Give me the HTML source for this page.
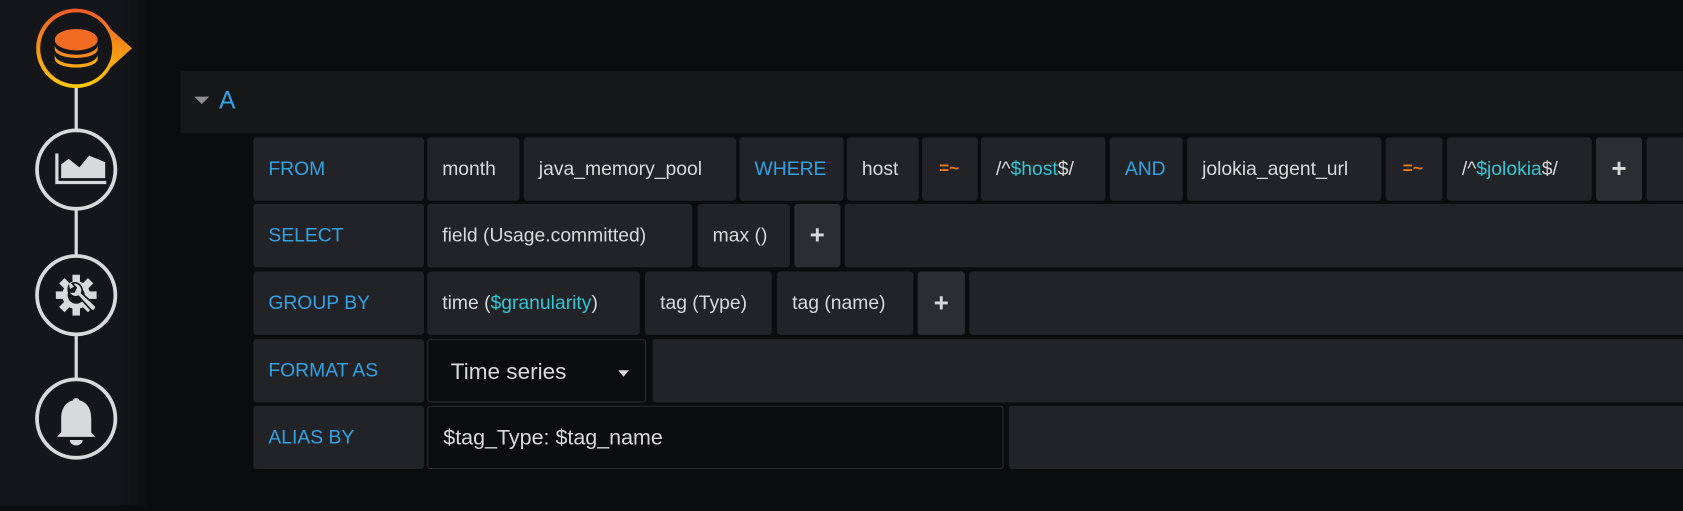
<!DOCTYPE html>
<html><head><meta charset="utf-8"><style>
html,body{margin:0;padding:0;background:#0b0c0e;width:1683px;height:505px;overflow:hidden}
#w{position:absolute;left:0;top:0;width:1568px;height:471px;transform:scale(1.0733);transform-origin:0 0;font-family:"Liberation Sans",sans-serif;font-size:18px;color:#d8d9da}
#side{position:absolute;left:0;top:0;width:136px;height:471px;background:linear-gradient(90deg,#141619 0,#141619 110px,#0e0f11 136px)}
#hdr{position:absolute;left:168px;top:66px;width:1400px;height:58px;background:#161719}
#hdr .t{position:absolute;left:36px;top:14px;font-size:23px;color:#33a2e5}
#hdr .c{position:absolute;left:13px;top:24px;width:0;height:0;border-left:7px solid transparent;border-right:7px solid transparent;border-top:7px solid #8e8e8e}
.row{position:absolute;left:236px;height:59px;width:1340px}
.s{position:absolute;top:0;height:59px;background:#222327;border-radius:3px;line-height:59px;white-space:nowrap;padding-left:14px;box-sizing:border-box}
.lb{color:#33a2e5}
.k{color:#33a2e5}
.op{color:#eb7b18;font-weight:bold}
.v{color:#33c5d4}
.p{background:#2c2d32;text-align:center;padding:0;font-weight:bold;font-size:24px}
.dk{background:#0b0c0e;border:1px solid #2a2b2e}
</style></head><body><div id="w">
<div id="side">
<svg width="136" height="471" viewBox="0 0 136 471">
<defs><linearGradient id="g" x1="0" y1="0" x2="0" y2="1"><stop offset="0" stop-color="#f05a28"/><stop offset="1" stop-color="#fbca0a"/></linearGradient></defs>
<line x1="71" y1="80" x2="71" y2="360" stroke="#d8d9da" stroke-width="3"/>
<path d="M71 8 A37 37 0 0 1 103 27 L123 45 L103 63 A37 37 0 1 1 71 8 Z" fill="url(#g)"/>
<circle cx="71" cy="45" r="33.5" fill="#141619"/>
<ellipse cx="71" cy="37" rx="20" ry="10" fill="#f26b22"/>
<path d="M51 42 v4 a20 8 0 0 0 40 0 v-4 a20 9 0 0 1 -40 0Z" fill="#f58a1f"/>
<path d="M51 51 v4 a20 8 0 0 0 40 0 v-4 a20 9 0 0 1 -40 0Z" fill="#f9a71a"/>
<g fill="#141619" stroke="#d8d9da" stroke-width="3.5">
<circle cx="71" cy="158" r="36.5"/><circle cx="71" cy="275" r="36.5"/><circle cx="71" cy="390" r="36.5"/></g>
<path d="M53 143 v27 h46" fill="none" stroke="#d8d9da" stroke-width="3"/>
<path d="M57 166 v-13 l7 -5 l10 8 l9 -11 l15 6 v15z" fill="#d8d9da"/>
<g transform="translate(71,275)" fill="#d8d9da">
<circle r="13"/><g><rect x="-3.5" y="-19" width="7" height="38"/><rect x="-19" y="-3.5" width="38" height="7"/><rect x="-3.5" y="-19" width="7" height="38" transform="rotate(45)"/><rect x="-3.5" y="-19" width="7" height="38" transform="rotate(-45)"/></g>
<circle r="8" fill="#141619"/>
<path d="M-7 -8 a7 7 0 0 0 9 9 l12 13 a3 3 0 0 0 4 -4 l-13 -12 a7 7 0 0 0 -9 -9 l4 4 l-2 4 l-4 0z" fill="#d8d9da" stroke="#141619" stroke-width="1.5"/>
</g>
<path d="M71 371 c-2 0-3 1-3 2 c-8 2-11 9-11 17 v13 l-4 4 h36 l-4-4 v-13 c0-8-3-15-11-17 c0-1-1-2-3-2z" fill="#d8d9da"/>
<path d="M65 410 h12 a6 5 0 0 1 -12 0z" fill="#d8d9da"/>
</svg>
</div>
<div id="hdr"><div class="c"></div><div class="t">A</div></div>

<div class="row" style="top:128px">
<div class="s lb" style="left:0;width:159px">FROM</div>
<div class="s" style="left:162px;width:86px">month</div>
<div class="s" style="left:252px;width:198px">java_memory_pool</div>
<div class="s k" style="left:453px;width:97px">WHERE</div>
<div class="s" style="left:553px;width:67px">host</div>
<div class="s op" style="left:623px;width:52px;padding-left:16px;font-size:16px">=~</div>
<div class="s" style="left:678px;width:116px">/^<span class="v">$host</span>$/</div>
<div class="s k" style="left:798px;width:68px">AND</div>
<div class="s" style="left:870px;width:181px">jolokia_agent_url</div>
<div class="s op" style="left:1055px;width:53px;padding-left:16px;font-size:16px">=~</div>
<div class="s" style="left:1112px;width:135px">/^<span class="v">$jolokia</span>$/</div>
<div class="s p" style="left:1251px;width:43px">+</div>
<div class="s" style="left:1298px;width:40px"></div>
</div>

<div class="row" style="top:190px">
<div class="s lb" style="left:0;width:159px">SELECT</div>
<div class="s" style="left:162px;width:247px">field (Usage.committed)</div>
<div class="s" style="left:414px;width:86px">max ()</div>
<div class="s p" style="left:504px;width:43px">+</div>
<div class="s" style="left:551px;width:790px"></div>
</div>

<div class="row" style="top:253px">
<div class="s lb" style="left:0;width:159px">GROUP BY</div>
<div class="s" style="left:162px;width:198px">time (<span class="v">$granularity</span>)</div>
<div class="s" style="left:365px;width:118px">tag (Type)</div>
<div class="s" style="left:488px;width:127px">tag (name)</div>
<div class="s p" style="left:619px;width:44px">+</div>
<div class="s" style="left:667px;width:680px"></div>
</div>

<div class="row" style="top:316px">
<div class="s lb" style="left:0;width:159px">FORMAT AS</div>
<div class="s dk" style="left:162px;width:204px;padding-left:21px;font-size:21px">Time series<span style="position:absolute;left:177px;top:28px;width:0;height:0;border-left:5px solid transparent;border-right:5px solid transparent;border-top:6px solid #d8d9da"></span></div>
<div class="s" style="left:372px;width:970px"></div>
</div>

<div class="row" style="top:378px">
<div class="s lb" style="left:0;width:159px">ALIAS BY</div>
<div class="s dk" style="left:162px;width:537px;font-size:20px">$tag_Type: $tag_name</div>
<div class="s" style="left:704px;width:640px"></div>
</div>
</div></body></html>
